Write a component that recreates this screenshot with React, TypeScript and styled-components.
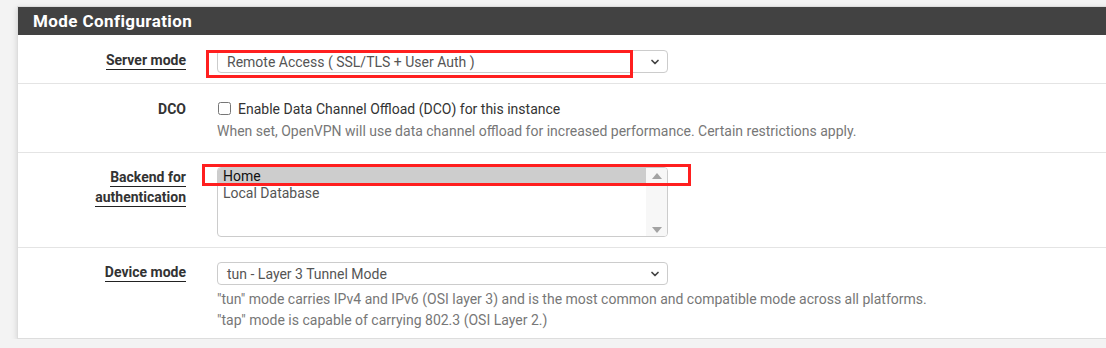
import React from 'react';
import styled, { createGlobalStyle } from 'styled-components';
import { ChevronDown } from 'lucide-react';

const GlobalStyle = createGlobalStyle`
  html, body {
    margin: 0;
    padding: 0;
    background: #f3f3f3;
    overflow: hidden;
  }
  body {
    font-family: Roboto, "Liberation Sans", Arial, sans-serif;
    font-size: 14px;
    color: #333;
  }
`;

const Page = styled.div`
  padding: 6px 0 0 17px;
  width: 1130px;
`;

const Panel = styled.section`
  background: #fff;
  border: 1px solid #ddd;
  border-right: none;
  box-shadow: 0 2px 6px rgba(0, 0, 0, 0.14);
`;

const Heading = styled.h2`
  margin: 0;
  height: 28px;
  line-height: 28px;
  padding-left: 15px;
  background: #424242;
  color: #fff;
  font-size: 17px;
  font-weight: 700;
  letter-spacing: 0.4px;
`;

const Row = styled.div<{ $pt?: number; $pb?: number; $last?: boolean }>`
  position: relative;
  display: flex;
  padding: ${(p) => p.$pt ?? 15}px 0 ${(p) => p.$pb ?? 10}px;
  border-bottom: ${(p) => (p.$last ? 'none' : '1px solid #e4e4e4')};
`;

const Label = styled.div`
  width: 183px;
  flex: none;
  box-sizing: border-box;
  padding-right: 15px;
  text-align: right;
  font-weight: 700;
  font-size: 14px;
  line-height: 20px;
  color: #333;
`;

const Req = styled.span`
  border-bottom: 1px solid #222;
  padding-bottom: 1px;
`;

const Control = styled.div`
  flex: none;
  width: 451px;
  margin-left: 16px;
`;

const SelectBox = styled.div`
  height: 23px;
  box-sizing: border-box;
  border: 1px solid #ccc;
  border-radius: 4px;
  display: flex;
  align-items: center;
  justify-content: space-between;
  padding: 0 6px 0 9px;
  color: #555;
  font-size: 14px;
  background: #fff;
  svg {
    color: #444;
  }
`;

const CheckLine = styled.label`
  display: flex;
  align-items: center;
  height: 19px;
  color: #333;
  font-size: 14px;
  input {
    width: 13px;
    height: 13px;
    margin: 0 7px 0 1px;
  }
`;

const Help = styled.div<{ $mt?: number }>`
  margin-top: ${(p) => p.$mt ?? 0}px;
  color: #777;
  font-size: 14px;
  line-height: 21px;
  white-space: nowrap;
`;

const ListBox = styled.div`
  height: 70px;
  box-sizing: border-box;
  border: 1px solid #ccc;
  border-radius: 4px;
  display: flex;
  overflow: hidden;
`;

const Options = styled.div`
  flex: 1;
`;

const Option = styled.div<{ $selected?: boolean }>`
  height: 17px;
  line-height: 17px;
  padding-left: 5px;
  font-size: 14px;
  background: ${(p) => (p.$selected ? '#cdcdcd' : 'transparent')};
  color: ${(p) => (p.$selected ? '#111' : '#555')};
`;

const ScrollTrack = styled.div`
  width: 21px;
  background: #f7f7f7;
  display: flex;
  flex-direction: column;
  justify-content: space-between;
  align-items: center;
  padding: 5px 0 3px;
  box-sizing: border-box;
`;

const Arrow = styled.span<{ $down?: boolean }>`
  width: 0;
  height: 0;
  border-left: 5px solid transparent;
  border-right: 5px solid transparent;
  ${(p) => (p.$down ? 'border-top: 6px solid #a3a3a3;' : 'border-bottom: 6px solid #a3a3a3;')}
`;

const Mark = styled.div<{ $left: number; $top: number; $w: number; $h: number }>`
  position: absolute;
  left: ${(p) => p.$left}px;
  top: ${(p) => p.$top}px;
  width: ${(p) => p.$w}px;
  height: ${(p) => p.$h}px;
  box-sizing: border-box;
  border: 3px solid #ff1f1f;
  pointer-events: none;
`;

export default function App() {
  return (
    <>
      <GlobalStyle />
      <Page>
        <Panel>
          <Heading>Mode Configuration</Heading>

          <Row>
            <Label>
              <Req>Server mode</Req>
            </Label>
            <Control>
              <SelectBox>
                <span>Remote Access ( SSL/TLS + User Auth )</span>
                <ChevronDown size={12} strokeWidth={3.5} />
              </SelectBox>
            </Control>
            <Mark $left={188} $top={15} $w={427} $h={28} />
          </Row>

          <Row>
            <Label>DCO</Label>
            <Control>
              <CheckLine>
                <input type="checkbox" />
                Enable Data Channel Offload (DCO) for this instance
              </CheckLine>
              <Help $mt={3}>
                When set, OpenVPN will use data channel offload for increased performance. Certain restrictions apply.
              </Help>
            </Control>
          </Row>

          <Row $pt={14}>
            <Label>
              <Req>Backend for</Req>
              <br />
              <Req>authentication</Req>
            </Label>
            <Control>
              <ListBox>
                <Options>
                  <Option $selected>Home</Option>
                  <Option>Local Database</Option>
                </Options>
                <ScrollTrack>
                  <Arrow />
                  <Arrow $down />
                </ScrollTrack>
              </ListBox>
            </Control>
            <Mark $left={184} $top={11} $w={489} $h={22} />
          </Row>

          <Row $pt={14} $pb={7} $last>
            <Label>
              <Req>Device mode</Req>
            </Label>
            <Control>
              <SelectBox>
                <span>tun - Layer 3 Tunnel Mode</span>
                <ChevronDown size={12} strokeWidth={3.5} />
              </SelectBox>
              <Help $mt={4}>
                "tun" mode carries IPv4 and IPv6 (OSI layer 3) and is the most common and compatible mode across all platforms.
              </Help>
              <Help>"tap" mode is capable of carrying 802.3 (OSI Layer 2.)</Help>
            </Control>
          </Row>
        </Panel>
      </Page>
    </>
  );
}
